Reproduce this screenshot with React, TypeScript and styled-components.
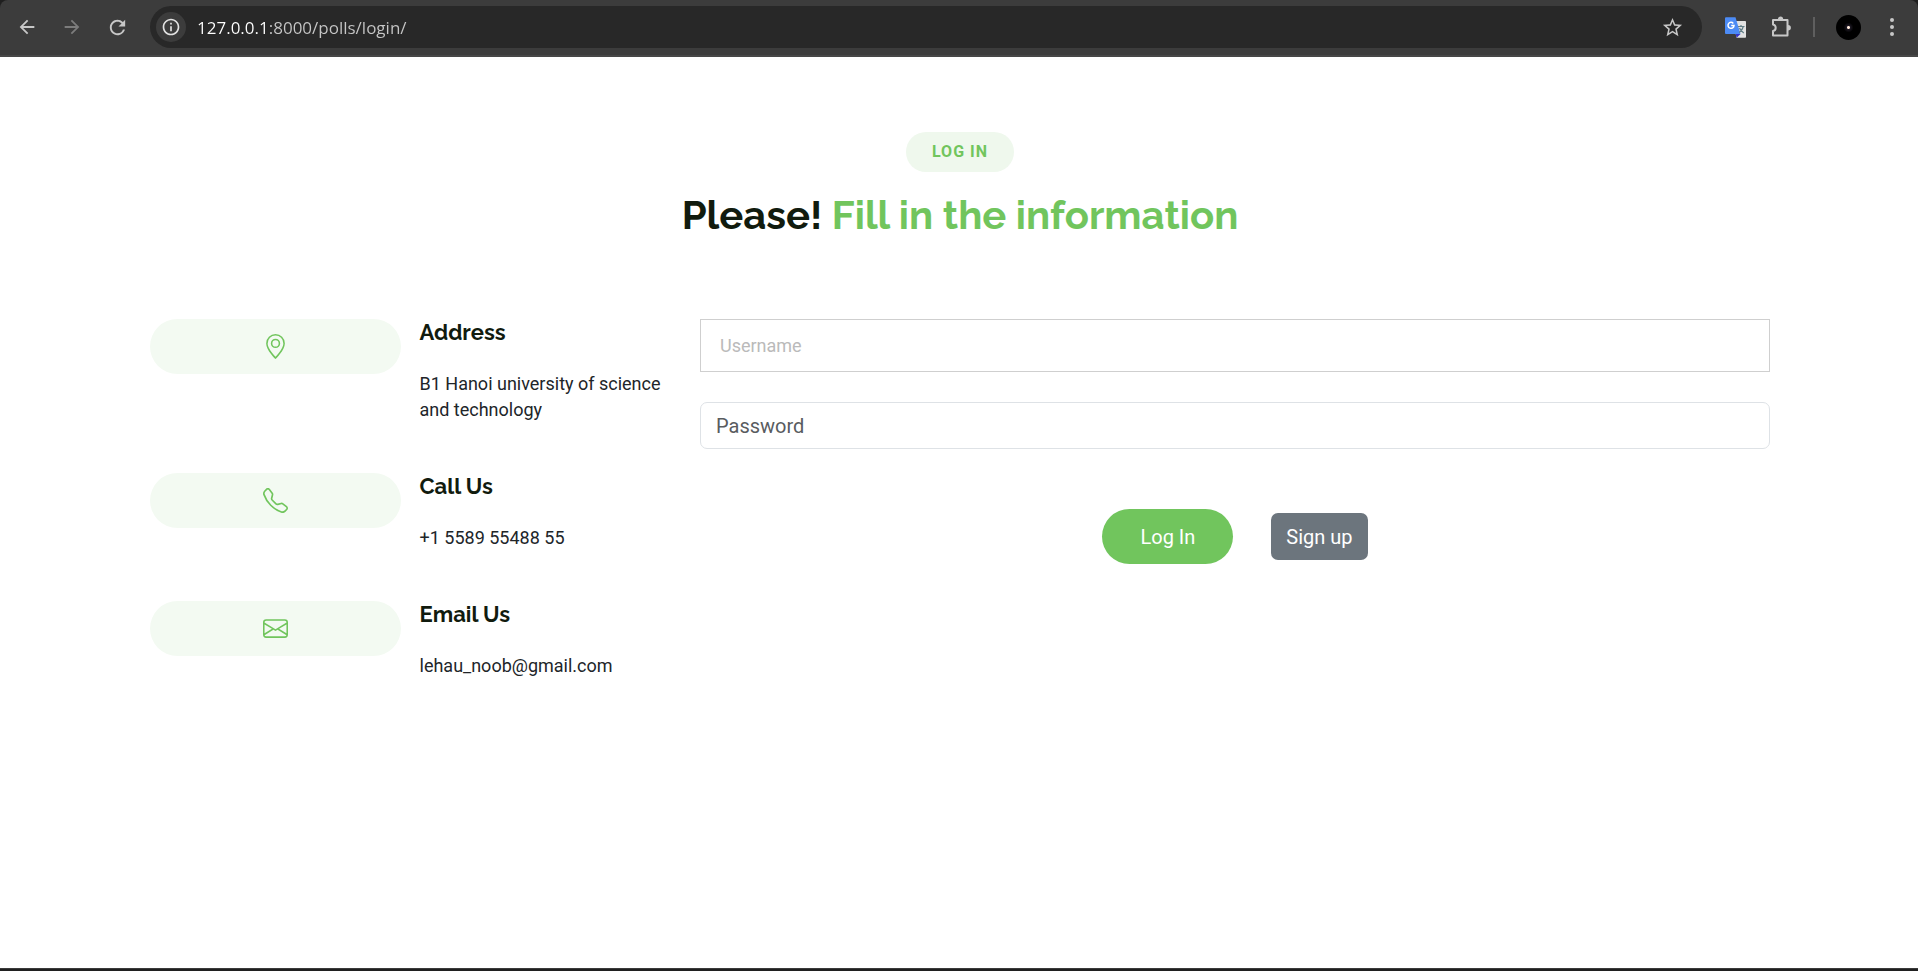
import React from "react";
import styled, { createGlobalStyle } from "styled-components";
import { BsEnvelope, BsGeoAlt, BsTelephone } from "react-icons/bs";
import {
  MdArrowBack,
  MdArrowForward,
  MdInfoOutline,
  MdRefresh,
  MdStarBorder,
} from "react-icons/md";

const GlobalStyle = createGlobalStyle`
  *, *::before, *::after { box-sizing: border-box; }
  body {
    margin: 0;
    background: #ffffff;
    color: #212529;
    font-family: Roboto, "Liberation Sans", sans-serif;
  }
  button, input { font-family: inherit; }
`;

const green = "#71c55d";

const Window = styled.div`
  min-height: 100vh;
  display: flex;
  flex-direction: column;
  background: #ffffff;
`;

const ToolbarFrame = styled.header`
  background: #1f1f1f;
`;

const Toolbar = styled.div`
  height: 57px;
  padding: 0 16px 1px 15px;
  display: flex;
  align-items: center;
  gap: 21px;
  background: #3c3c3c;
  border-bottom: 2px solid #474747;
  border-radius: 8px 8px 0 0;
`;

const IconButton = styled.button<{ $dim?: boolean; $width?: number }>`
  flex: none;
  width: ${(p) => p.$width ?? 24}px;
  height: 24px;
  padding: 0;
  border: 0;
  background: none;
  color: ${(p) => (p.$dim ? "#7c7c7c" : "#c7c7c7")};
  display: flex;
  align-items: center;
  justify-content: center;
`;

const AddressBar = styled.div`
  flex: 1;
  min-width: 0;
  height: 42px;
  padding: 0 18px 0 6px;
  display: flex;
  align-items: center;
  gap: 11px;
  border-radius: 21px;
  background: #282828;
`;

const SiteInfo = styled.button`
  flex: none;
  width: 30px;
  height: 30px;
  padding: 0;
  border: 0;
  border-radius: 50%;
  background: #3c3c3c;
  color: #e3e3e3;
  display: flex;
  align-items: center;
  justify-content: center;
`;

const UrlInput = styled.input`
  flex: 1;
  min-width: 0;
  height: 30px;
  padding: 0;
  border: 0;
  outline: 0;
  color: transparent;
  background: linear-gradient(90deg, #ffffff 70px, #c7c7c7 70px);
  background-clip: text;
  font-family: "Open Sans", "Noto Sans", sans-serif;
  font-size: 17px;
`;

const Divider = styled.span`
  flex: none;
  width: 2px;
  height: 20px;
  background: #5f5f5f;
`;

const Avatar = styled.button`
  flex: none;
  width: 25px;
  height: 25px;
  padding: 0;
  border: 0;
  border-radius: 50%;
  background: radial-gradient(circle, #ffe8d8 0 1px, #1c1822 2px, #000000 5px);
`;

const Page = styled.main`
  flex: 1;
  width: 100%;
  max-width: 1650px;
  margin: 0 auto;
  padding: 75px 14px 75px 16px;
`;

const SectionTitle = styled.div`
  display: flex;
  flex-direction: column;
  align-items: center;
  margin-bottom: 80px;
`;

const Badge = styled.h2`
  margin: 0 0 19px;
  padding: 10px 26px;
  border-radius: 50px;
  background: #eff8ed;
  color: ${green};
  font-size: 16px;
  line-height: 20px;
  font-weight: 700;
  letter-spacing: 1px;
  text-transform: uppercase;
`;

const Heading = styled.h3`
  margin: 0;
  color: #111b0e;
  font-family: Raleway, Lato, sans-serif;
  font-size: 40px;
  line-height: 48px;
  font-weight: 700;

  span { color: ${green}; }
`;

const Columns = styled.div`
  display: grid;
  grid-template-columns: minmax(0, 52fr) minmax(0, 107fr);
  gap: 30px;
`;

const InfoList = styled.div`
  display: flex;
  flex-direction: column;
  gap: 50px;
`;

const InfoItem = styled.section`
  display: grid;
  grid-template-columns: minmax(0, 1fr) minmax(0, 1fr);
  align-items: start;
  gap: 19px;
`;

const InfoIcon = styled.div`
  height: 55px;
  display: flex;
  align-items: center;
  justify-content: center;
  border-radius: 50px;
  background: #f3faf2;
  color: ${green};
`;

const InfoHeading = styled.h4`
  margin: 0 0 26px;
  color: #111b0e;
  font-family: Raleway, Lato, sans-serif;
  font-size: 22px;
  line-height: 26px;
  font-weight: 700;
`;

const InfoText = styled.p`
  margin: 0;
  font-size: 18px;
  line-height: 26px;
`;

const LoginForm = styled.form`
  display: flex;
  flex-direction: column;
`;

const UsernameInput = styled.input`
  width: 100%;
  height: 53px;
  padding: 0 19px;
  border: 1px solid #cfcfcf;
  border-radius: 0;
  font-size: 18px;

  &::placeholder { color: #bababa; opacity: 1; }
`;

const PasswordInput = styled.input`
  width: 100%;
  height: 47px;
  margin-top: 30px;
  padding: 0 15px;
  border: 1px solid #dee2e6;
  border-radius: 7px;
  font-size: 20px;

  &::placeholder { color: #595c5f; opacity: 1; }
`;

const Actions = styled.div`
  margin-top: 60px;
  display: flex;
  align-items: center;
  justify-content: center;
  gap: 38px;
`;

const ActionButton = styled.button<{ $primary?: boolean }>`
  height: ${(p) => (p.$primary ? 55 : 47)}px;
  padding: 0 ${(p) => (p.$primary ? 38 : 15)}px;
  border: 0;
  border-radius: ${(p) => (p.$primary ? 50 : 7)}px;
  background: ${(p) => (p.$primary ? green : "#6c757d")};
  color: #ffffff;
  font-size: 20px;
`;

const BottomEdge = styled.footer`
  height: 3px;
  background: #202020;
  border-top: 1px solid #3a3a3a;
`;

const TranslateIcon = () => (
  <svg width="24" height="24" viewBox="0 0 24 24" aria-hidden="true">
    <path d="M10 6h12.200a.8.8 0 0 1 .8.8v15.100a.8.8 0 0 1-.8.8H13.500z" fill="#e2e2e2" />
    <path d="M12.500 19h5l-3.800 3.800z" fill="#3434c8" />
    <path d="M3 2.300h9.500l5 16.700H3a1 1 0 0 1-1-1V3.300a1 1 0 0 1 1-1z" fill="#4c8bf5" />
    <path d="M10.300 8.400a3 3 0 1 0 .7 2.200H8.200" fill="none" stroke="#ffffff" strokeWidth="1.500" />
    <path
      d="M15 11.500h6.500M18 10v1.500M20.300 11.500c-.6 2.800-2.200 4.600-4 6M16.500 13c.8 2 2.200 3.600 4.300 5"
      fill="none"
      stroke="#607d86"
      strokeWidth="1.200"
    />
  </svg>
);

const PuzzleIcon = () => (
  <svg width="24" height="24" viewBox="0 0 24 24" aria-hidden="true">
    <path
      d="M5 5h14.500v15.500H5v-4.500c1.700-.3 2.700-1.600 2.700-3.300S6.700 9.700 5 9.400z"
      fill="none"
      stroke="currentColor"
      strokeWidth="2"
      strokeLinejoin="round"
    />
    <path d="M9.800 4.500a2.700 2.900 0 0 1 5.400 0zM20 10a2.900 2.700 0 0 1 0 5.400z" fill="currentColor" />
  </svg>
);

const DotsIcon = () => (
  <svg width="20" height="24" viewBox="0 0 20 24" fill="currentColor" aria-hidden="true">
    <circle cx="10" cy="5" r="2" />
    <circle cx="10" cy="12" r="2" />
    <circle cx="10" cy="19" r="2" />
  </svg>
);

const contacts = [
  { title: "Address", text: "B1 Hanoi university of science and technology", Icon: BsGeoAlt },
  { title: "Call Us", text: "+1 5589 55488 55", Icon: BsTelephone },
  { title: "Email Us", text: "lehau_noob@gmail.com", Icon: BsEnvelope },
];

export default function App() {
  return (
    <Window>
      <GlobalStyle />
      <ToolbarFrame>
        <Toolbar>
          <IconButton aria-label="Back"><MdArrowBack size={22} /></IconButton>
          <IconButton aria-label="Forward" $dim><MdArrowForward size={22} /></IconButton>
          <IconButton aria-label="Reload"><MdRefresh size={23} /></IconButton>
          <AddressBar>
            <SiteInfo aria-label="Site information"><MdInfoOutline size={20} /></SiteInfo>
            <UrlInput aria-label="Address bar" defaultValue="127.0.0.1:8000/polls/login/" spellCheck={false} />
            <IconButton aria-label="Bookmark this page"><MdStarBorder size={23} /></IconButton>
          </AddressBar>
          <IconButton aria-label="Translate"><TranslateIcon /></IconButton>
          <IconButton aria-label="Extensions"><PuzzleIcon /></IconButton>
          <Divider />
          <Avatar aria-label="Profile" />
          <IconButton aria-label="Menu" $width={20}><DotsIcon /></IconButton>
        </Toolbar>
      </ToolbarFrame>

      <Page>
        <SectionTitle>
          <Badge>Log in</Badge>
          <Heading>Please! <span>Fill in the information</span></Heading>
        </SectionTitle>
        <Columns>
          <InfoList>
            {contacts.map(({ title, text, Icon }) => (
              <InfoItem key={title}>
                <InfoIcon><Icon size={25} /></InfoIcon>
                <div>
                  <InfoHeading>{title}</InfoHeading>
                  <InfoText>{text}</InfoText>
                </div>
              </InfoItem>
            ))}
          </InfoList>
          <LoginForm onSubmit={(e) => e.preventDefault()}>
            <UsernameInput name="username" aria-label="Username" placeholder="Username" />
            <PasswordInput name="password" type="password" aria-label="Password" placeholder="Password" />
            <Actions>
              <ActionButton type="submit" $primary>Log In</ActionButton>
              <ActionButton type="button">Sign up</ActionButton>
            </Actions>
          </LoginForm>
        </Columns>
      </Page>
      <BottomEdge />
    </Window>
  );
}
